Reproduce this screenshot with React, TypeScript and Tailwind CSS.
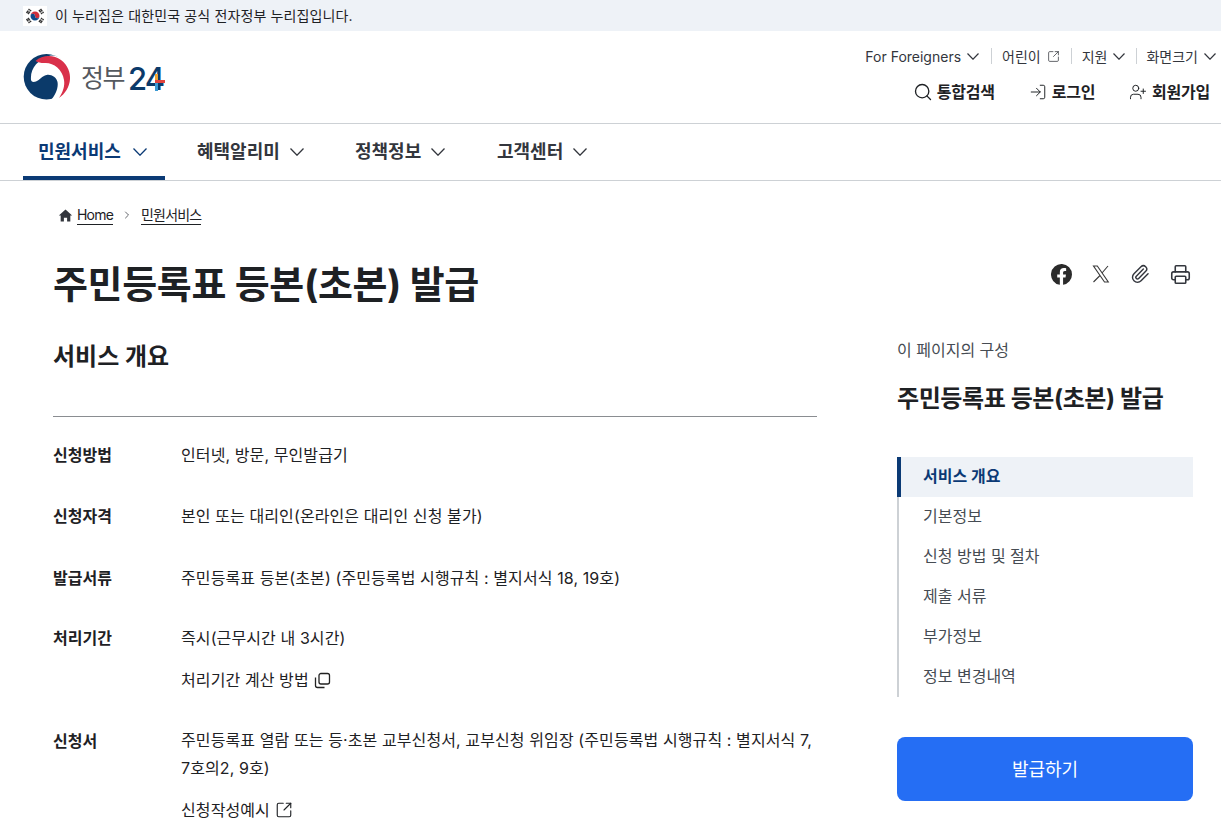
import React from "react";
import { ChevronRight, Search, LogIn, UserPlus, SquareArrowOutUpRight, Paperclip, Printer } from "lucide-react";

const F = { fontFamily: '"Inter", "Noto Sans CJK KR", sans-serif' };

function Chev({ w = 12, color = "#33363d", sw = 1.2 }: { w?: number; color?: string; sw?: number }) {
  const h = Math.round(w * 0.58);
  return (
    <svg width={w} height={h} viewBox={`0 0 ${w} ${h}`} fill="none" stroke={color} strokeWidth={sw} className="shrink-0">
      <path d={`M.5 .5L${w / 2} ${h - 0.8}L${w - 0.5} .5`} />
    </svg>
  );
}

function Flag() {
  return (
    <svg width="24" height="20" viewBox="0 0 24 20" className="shrink-0">
      <rect width="24" height="20" fill="#fff" />
      <path d="M7.500 10a4.500 4.500 0 0 1 9 0a2.250 2.250 0 0 1-4.500 0a2.250 2.250 0 0 0-4.500 0z" fill="#cd2e3a" />
      <path d="M7.500 10a4.500 4.500 0 0 0 9 0a2.250 2.250 0 0 1-4.500 0a2.250 2.250 0 0 0-4.500 0z" fill="#0f4a8a" />
      <g stroke="#333" strokeWidth="1.500" strokeDasharray="3 0.6">
        <path d="M3.500 7l3-4M5 8l3-4M16 4l3 4M17.500 3l3 4M3.500 13l3 4M5 12l3 4M16 16l3-4M17.500 17l3-4" />
      </g>
    </svg>
  );
}

function Emblem() {
  return (
    <svg width="48" height="46" viewBox="0 0 48 46" className="shrink-0">
      <circle cx="23.500" cy="22.800" r="22.800" fill="#0b3a6a" />
      <path d="M8 26C7 14 15 6 26 2C36 -1 48 10 48 24C48 34 40 43 28 46C33 41 35.500 33 34.500 28C33.500 23 28 20 23.500 21C19 22 17 26 13 27.500C10.500 28.500 8.500 28 8 26Z" fill="#fff" />
      <path d="M12.500 7C19 1 30 0 38 6C45 11 47.500 19 47 25C46.500 33 42 40 36 44C40 38 42 32 41 26C39.500 15 30 8.500 22 9C18.500 9.200 15.500 8.500 12.500 7Z" fill="#d9304a" />
    </svg>
  );
}

function XIcon() {
  return (
    <svg width="18" height="18" viewBox="0 0 18 18" fill="none" stroke="#3a3a3a" strokeWidth="1.100">
      <path d="M1.500 1h3.800l11 16h-3.800zM16 1L10 8M8 10.500L1.500 17" />
    </svg>
  );
}

function Facebook() {
  return (
    <svg width="21" height="21" viewBox="0 0 24 24">
      <path fill="#2b2b2b" d="M24 12a12 12 0 1 0-13.900 11.850v-8.400H7.100V12h3V9.400c0-3 1.800-4.700 4.500-4.700 1.300 0 2.700.25 2.700.25v2.950h-1.500c-1.500 0-2 .9-2 1.900V12h3.300l-.5 3.450h-2.800v8.400A12 12 0 0 0 24 12z" />
    </svg>
  );
}

function CopyIcon() {
  return (
    <svg width="17" height="17" viewBox="0 0 17 17" fill="none" stroke="#222" strokeWidth="1.300">
      <rect x="5" y="1.500" width="10.500" height="10.500" rx="2" />
      <path d="M1.500 5.500v8a2 2 0 0 0 2 2h7" />
    </svg>
  );
}

function Row({ label, children, className }: { label: string; children: React.ReactNode; className?: string }) {
  return (
    <div className={"flex " + (className ?? "")}>
      <div className="w-[128px] shrink-0 text-[16px] leading-[28px] font-bold text-[#1e2124]">{label}</div>
      <div className="flex-1 text-[16px] leading-[28px] tracking-[0.1px] text-[#1e2124]">{children}</div>
    </div>
  );
}

function NavItem({ label, active, w }: { label: string; active?: boolean; w: string }) {
  return (
    <div className={"h-full flex items-center pl-[15px] pt-[4px] border-b-4 " + w + " " + (active ? "gap-[12px] border-[#0b3a75] text-[#0b3a75]" : "gap-[10px] border-transparent text-[#33363d]")}>
      <span className="text-[18px] font-bold leading-none">{label}</span>
      <Chev w={14} color={active ? "#0b3a75" : "#33363d"} sw={1.300} />
    </div>
  );
}

function Util({ label, icon }: { label: string; icon: React.ReactNode }) {
  return (
    <div className="flex items-center gap-[6px] text-[14px] text-[#33363d]">
      <span>{label}</span>
      {icon}
    </div>
  );
}

function SideItem({ children }: { children: React.ReactNode }) {
  return <div className="h-[40px] flex items-center pl-[24px] pb-[2px]">{children}</div>;
}

export default function App() {
  return (
    <div style={F} className="w-[1221px] h-[829px] overflow-hidden bg-white text-[#1e2124]">
      <div className="h-[31px] bg-[#eef2f7] flex items-center pl-[23px] gap-[8px] text-[14px] tracking-[0.13px] text-[#1e2124]">
        <Flag />
        <span>이 누리집은 대한민국 공식 전자정부 누리집입니다.</span>
      </div>

      <div className="h-[93px] border-b border-[#cdd1d5] flex justify-between pl-[23px] pr-[5px]">
        <div className="flex items-center gap-[10px] pb-[1px]">
          <Emblem />
          <div className="relative flex items-center leading-none whitespace-nowrap w-[85px] h-[32px] mt-[3px]">
            <span className="text-[25px] text-[#55595f] tracking-[-1.500px]">정부</span>
            <span className="text-[31px] font-medium text-[#0b3a6a] tracking-[-2px] ml-[4px]">24</span>
            <span className="absolute left-[74px] top-[12px] w-[3px] h-[8px] bg-[#f0a030]" />
            <span className="absolute left-[74px] top-[20px] w-[3px] h-[9px] bg-[#3b9ad4]" />
            <span className="absolute left-[74px] top-[18px] w-[10px] h-[3px] bg-[#e0443e]" />
          </div>
        </div>
        <div className="flex flex-col items-end pt-[15px]">
          <div className="flex items-center h-[20px]">
            <Util label="For Foreigners" icon={<Chev />} />
            <div className="w-px h-[16px] bg-[#cdd1d5] ml-[12px] mr-[10px]" />
            <Util label="어린이" icon={<SquareArrowOutUpRight size={13} strokeWidth={1.400} />} />
            <div className="w-px h-[16px] bg-[#cdd1d5] ml-[11px] mr-[10px]" />
            <Util label="지원" icon={<Chev />} />
            <div className="w-px h-[16px] bg-[#cdd1d5] ml-[11px] mr-[9px]" />
            <Util label="화면크기" icon={<Chev />} />
          </div>
          <div className="flex items-center mt-[14px] gap-[34px] pr-[6px] text-[16px] tracking-[-0.25px] font-bold text-[#1e2124] h-[24px]">
            <div className="flex items-center gap-[4px]"><Search size={20} strokeWidth={1.600} />통합검색</div>
            <div className="flex items-center gap-[5px]"><LogIn size={18} strokeWidth={1.300} />로그인</div>
            <div className="flex items-center gap-[5px]"><UserPlus size={18} strokeWidth={1.300} />회원가입</div>
          </div>
        </div>
      </div>

      <div className="h-[57px] border-b border-[#cdd1d5] flex pl-[23px] gap-[17px]">
        <NavItem label="민원서비스" active w="w-[142px]" />
        <NavItem label="혜택알리미" w="w-[141px]" />
        <NavItem label="정책정보" w="w-[125px]" />
        <NavItem label="고객센터" w="w-[125px]" />
      </div>

      <div className="flex items-center pl-[58px] pt-[20px] h-[48px] text-[14px] tracking-[-0.8px] text-[#1e2124]">
        <svg width="15" height="15" viewBox="0 0 14 14" className="mr-[4px]"><path d="M7 1.500L.8 7h1.700v5.500h3V9h3v3.500h3V7h1.700z" fill="#33363d" /></svg>
        <span className="border-b border-[#1e2124] leading-[18px]">Home</span>
        <ChevronRight size={12} strokeWidth={1.500} color="#33363d" className="mx-[8px]" />
        <span className="border-b border-[#1e2124] leading-[18px]">민원서비스</span>
      </div>

      <div className="flex justify-between pl-[53px] pr-[30px] pt-[30px]">
        <h1 className="text-[38px] font-bold leading-[50px] tracking-[-0.35px] text-[#1e2124]">주민등록표 등본(초본) 발급</h1>
        <div className="flex items-center gap-[20px] h-[26px] mt-[2px] text-[#33363d]">
          <Facebook />
          <XIcon />
          <Paperclip size={20} strokeWidth={1.700} />
          <Printer size={21} strokeWidth={1.800} />
        </div>
      </div>

      <div className="flex pl-[53px] pr-[28px] gap-[80px]">
        <div className="w-[764px] shrink-0">
          <h2 className="mt-[32px] text-[24px] font-bold leading-[32px]">서비스 개요</h2>
          <div className="mt-[43px] border-t border-[#8a8d91] pt-[24px] flex flex-col gap-[33px]">
            <Row label="신청방법">인터넷, 방문, 무인발급기</Row>
            <Row label="신청자격">본인 또는 대리인(온라인은 대리인 신청 불가)</Row>
            <Row label="발급서류" className="mt-[1px]">주민등록표 등본(초본) (주민등록법 시행규칙 : 별지서식 18, 19호)</Row>
            <Row label="처리기간" className="-mt-[1px]">
              <div>즉시(근무시간 내 3시간)</div>
              <div className="mt-[14px] flex items-center gap-[5px]">처리기간 계산 방법 <CopyIcon /></div>
            </Row>
            <Row label="신청서">
              <div className="leading-[27.5px]">주민등록표 열람 또는 등·초본 교부신청서, 교부신청 위임장 (주민등록법 시행규칙 : 별지서식 7, 7호의2, 9호)</div>
              <div className="mt-[14px] flex items-center gap-[5px]">신청작성예시 <SquareArrowOutUpRight size={18} strokeWidth={1.500} /></div>
            </Row>
          </div>
        </div>
        <div className="w-[296px] shrink-0 pt-[29px]">
          <div className="text-[16px] leading-[24px] text-[#464c53]">이 페이지의 구성</div>
          <div className="mt-[21px] text-[24px] font-bold leading-[32px] tracking-[-0.4px]">주민등록표 등본(초본) 발급</div>
          <div className="mt-[42px] border-l-2 border-[#cdd1d5] flex flex-col text-[16px] text-[#464c53]">
            <div className="h-[40px] -ml-[2px] border-l-4 border-[#0b3a75] bg-[#eef2f7] flex items-center pl-[22px] pb-[2px] font-bold text-[#0b3a75]">서비스 개요</div>
            <SideItem>기본정보</SideItem>
            <SideItem>신청 방법 및 절차</SideItem>
            <SideItem>제출 서류</SideItem>
            <SideItem>부가정보</SideItem>
            <SideItem>정보 변경내역</SideItem>
          </div>
          <div className="mt-[40px] h-[64px] rounded-[8px] bg-[#256ef4] text-white text-[18px] flex items-center justify-center">발급하기</div>
        </div>
      </div>
    </div>
  );
}
